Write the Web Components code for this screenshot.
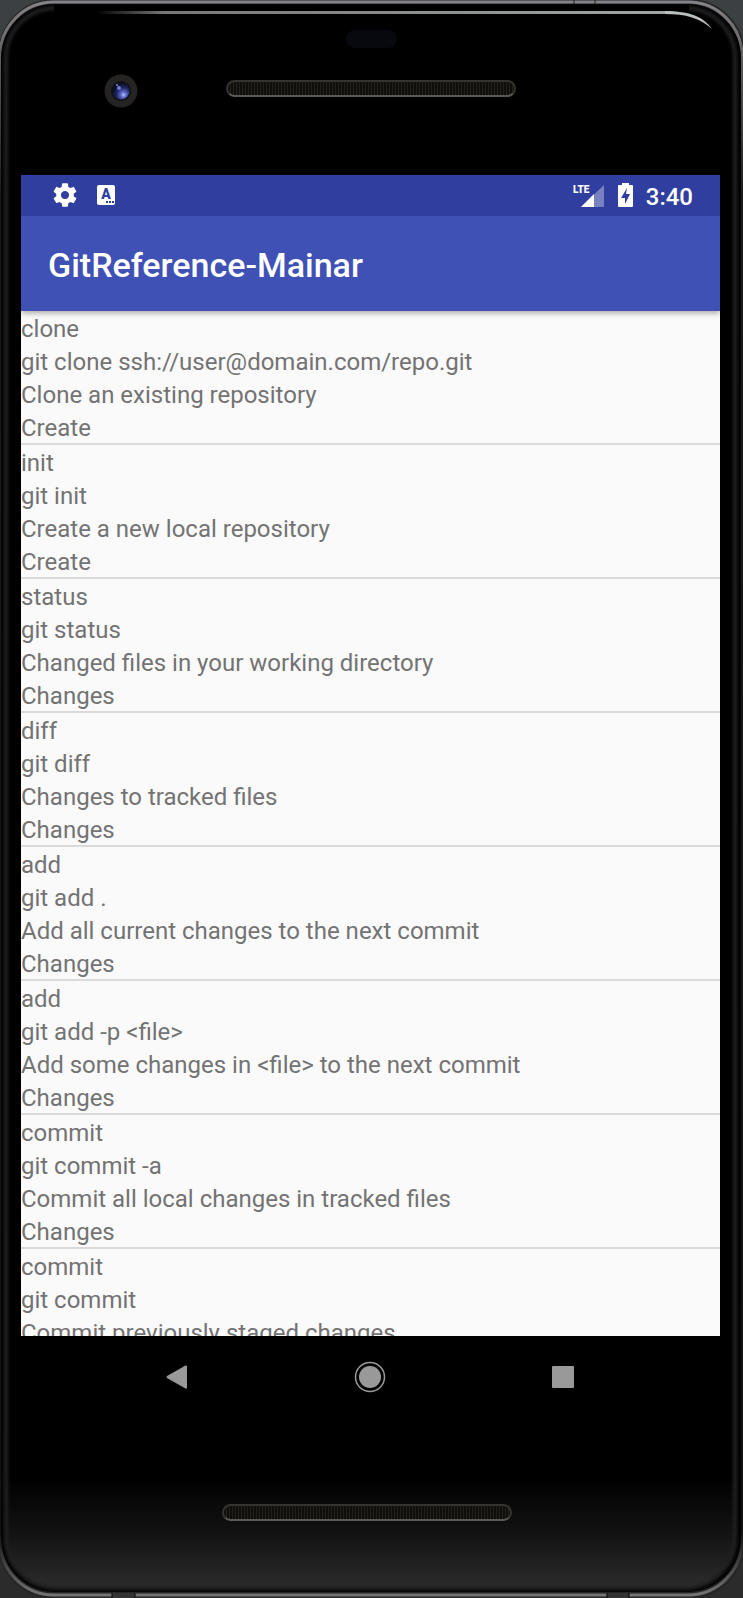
<!DOCTYPE html>
<html lang="en">
<head>
<meta charset="utf-8">
<meta name="viewport" content="width=device-width, initial-scale=1">
<title>GitReference-Mainar</title>
<style>
  html, body { margin: 0; height: 100%; }
  body { font-family: Roboto, "Liberation Sans", sans-serif; background: linear-gradient(#3c4043, #2b2b2b); }
</style>
</head>
<body>
<phone-device>
  <top-bezel slot="top"></top-bezel>
  <status-bar time="3:40"></status-bar>
  <app-bar>GitReference-Mainar</app-bar>
  <command-list></command-list>
  <nav-bar slot="nav"></nav-bar>
  <bottom-bezel slot="bottom"></bottom-bezel>
</phone-device>

<script>
const define = (name, html, setup) => {
  const template = document.createElement('template');
  template.innerHTML = html;
  customElements.define(name, class extends HTMLElement {
    constructor() {
      super();
      this.attachShadow({ mode: 'open' }).append(template.content.cloneNode(true));
    }
    connectedCallback() { if (setup) setup(this, this.shadowRoot); }
  });
};

/* Case outline, rim and glass reflections */
define('phone-shell', `
<style>
  :host { display: block; position: absolute; inset: 0; z-index: -1; overflow: hidden; }
  svg { display: block; width: 100%; height: 100%; }
  .rim { x: -2px; y: -1px; width: calc(100% + 4px); height: calc(100% + 2px); rx: 56px; }
  .band { x: 0px; y: 2px; width: calc(100% - 1px); height: calc(100% - 5px); rx: 54px; }
  .seam { x: 1px; y: 4px; width: calc(100% - 3px); height: calc(100% - 10px); rx: 54px; }
  .glass { x: 6px; y: 8px; width: calc(100% - 14px); height: calc(100% - 18px); rx: 50px; }
  .shine { x: 96px; y: 11px; width: calc(100% - 174px); height: 3px; }
</style>
<svg aria-hidden="true">
  <defs>
    <linearGradient id="edge" x2="0" y2="1">
      <stop offset="0" stop-color="#858387"/><stop offset=".04" stop-color="#5a595b"/>
      <stop offset=".12" stop-color="#1c1c1c"/><stop offset=".96" stop-color="#111"/><stop offset="1" stop-color="#747274"/>
    </linearGradient>
    <linearGradient id="shine"><stop offset="0" stop-color="#000"/><stop offset=".12" stop-color="#777"/><stop offset="1" stop-color="#a0a5a5"/></linearGradient>
    <linearGradient id="glass" x2="0" y2="1">
      <stop offset="0" stop-color="#000"/><stop offset=".93" stop-color="#000"/><stop offset=".965" stop-color="#121212"/><stop offset="1" stop-color="#2c2c2c"/>
    </linearGradient>
    <filter id="soft" x="-5%" y="-5%" width="110%" height="110%" color-interpolation-filters="sRGB"><feGaussianBlur stdDeviation="1.500"/></filter>
  </defs>
  <rect class="rim" fill="#262626"/>
  <rect class="band" fill="none" stroke="url(#edge)" stroke-width="3"/>
  <rect class="seam" fill="#030303"/>
  <rect class="glass" fill="url(#glass)" stroke="#202020" stroke-width="4" filter="url(#soft)"/>
  <rect x="54" y="5" style="width:calc(100% - 108px)" height="20" fill="#000"/>
  <rect class="shine" fill="url(#shine)"/>
  <svg x="100%" overflow="visible"><path d="M-78 11C-53 11-39 17-31 29C-43 18-57 14-78 14Z" fill="#b9bfbf"/></svg>
  <svg y="100%" overflow="visible">
    <rect x="112" y="-5" width="23" height="5" fill="#333"/><path d="M112-5v5M135-5v5" stroke="#090909"/>
  </svg>
  <svg x="100%" y="100%" overflow="visible">
    <rect x="-136" y="-5" width="22" height="5" fill="#333"/><path d="M-136-5v5M-114-5v5" stroke="#090909"/>
  </svg>
  <svg x="100%" overflow="visible"><path d="M-169 0v4M-148 0v4" stroke="#222"/></svg>
</svg>`);

define('phone-device', `
<style>
  :host { display: grid; grid-template-rows: 175px minmax(0, 1fr) 82px 180px; height: 100vh; position: relative; isolation: isolate; overflow: hidden; }
  main { display: flex; flex-direction: column; min-height: 0; margin: 0 23px 0 21px; background: #fafafa; }
</style>
<phone-shell></phone-shell>
<slot name="top"></slot>
<main><slot></slot></main>
<slot name="nav"></slot>
<slot name="bottom"></slot>`);

define('speaker-grille', `
<style>
  :host { display: block; box-sizing: border-box; width: 290px; height: 17px; border: 2px solid #35332f; border-bottom-color: #5b5855; border-radius: 9px;
    background: repeating-linear-gradient(90deg, #0f0e0b 0 2px, #24221c 2px 3px); }
</style>`);

define('top-bezel', `
<style>
  :host { display: grid; grid-template-columns: 1fr auto 1fr; grid-template-rows: 18px 34px; row-gap: 26px; padding: 30px 1px 0 0; align-content: start; }
  .sensor { grid-column: 2; justify-self: center; width: 51px; height: 18px; border-radius: 9px; background: #08090e; }
  .camera { grid-row: 2; margin-left: 104px; width: 34px; height: 34px; }
  speaker-grille { grid-row: 2; grid-column: 2; margin-top: 6px; }
</style>
<div class="sensor"></div>
<svg class="camera" viewBox="0 0 34 34" aria-hidden="true">
  <defs><radialGradient id="lens" cx=".65" cy=".72" r=".7"><stop offset="0" stop-color="#b4bcff"/><stop offset=".25" stop-color="#5a67c4"/><stop offset=".6" stop-color="#1d2560"/><stop offset="1" stop-color="#0b0d22"/></radialGradient></defs>
  <circle cx="17" cy="17" r="16.5" fill="#252423"/><circle cx="17" cy="17" r="10" fill="#111116"/>
  <circle cx="17" cy="17" r="8.5" fill="url(#lens)"/><circle cx="15" cy="14" r="2" fill="#6f7fd8"/><circle cx="13" cy="11" r="1" fill="#8791c0"/>
</svg>
<speaker-grille></speaker-grille>`);

define('bottom-bezel', `
<style>:host { display: flex; justify-content: center; align-items: flex-start; padding: 86px 10px 0 0; }</style>
<speaker-grille></speaker-grille>`);

define('status-bar', `
<style>
  :host { display: flex; align-items: center; justify-content: space-between; flex: none; box-sizing: border-box; height: 41px; padding: 0 27px 2px 30px; background: #303f9f; color: #fff; }
  div { display: flex; align-items: center; gap: 13px; }
  svg { display: block; }
  svg text { font-family: Roboto, sans-serif; font-weight: 900; }
  time { font-size: 24px; line-height: 28px; font-weight: 500; padding-top: 4px; }
</style>
<div>
  <svg width="28" height="28" viewBox="0 0 24 24" fill="#fff" role="img" aria-label="Settings"><path d="M19.43 12.98c.04-.32.07-.64.07-.98s-.03-.66-.07-.98l2.11-1.65c.19-.15.24-.42.12-.64l-2-3.46c-.12-.22-.39-.3-.61-.22l-2.49 1c-.52-.4-1.08-.73-1.69-.98l-.38-2.65C14.46 2.18 14.25 2 14 2h-4c-.25 0-.46.18-.49.42l-.38 2.65c-.61.25-1.17.59-1.69.98l-2.49-1c-.23-.09-.49 0-.61.22l-2 3.46c-.13.22-.07.49.12.64l2.11 1.65c-.04.32-.07.65-.07.98s.03.66.07.98l-2.11 1.65c-.19.15-.24.42-.12.64l2 3.46c.12.22.39.3.61.22l2.49-1c.52.4 1.08.73 1.69.98l.38 2.65c.03.24.24.42.49.42h4c.25 0 .46-.18.49-.42l.38-2.65c.61-.25 1.17-.59 1.69-.98l2.49 1c.23.09.49 0 .61-.22l2-3.46c.12-.22.07-.49-.12-.64l-2.11-1.65zM12 15.5c-1.93 0-3.5-1.57-3.5-3.5s1.57-3.5 3.5-3.5 3.5 1.57 3.5 3.5-1.57 3.5-3.5 3.5z"/></svg>
  <svg width="28" height="28" viewBox="0 0 28 28" role="img" aria-label="Keyboard"><rect x="5" y="4" width="18" height="20" rx="2" fill="#fff"/><text x="14" y="18" font-size="14" text-anchor="middle" fill="#303f9f">A</text><path d="M14 20h2v2h-2zM17 20h2v2h-2zM20 20h2v2h-2z" fill="#303f9f"/></svg>
</div>
<div>
  <svg width="32" height="28" viewBox="0 0 32 28" role="img" aria-label="LTE signal"><path d="M31 4v22H8z" fill="#fff" opacity=".35"/><path d="M21 13v13H8z" fill="#fff"/><text x="0" y="12" font-size="10" fill="#fff">LTE</text></svg>
  <svg width="15" height="28" viewBox="0 0 15 28" role="img" aria-label="Battery charging"><path d="M4 2h7v2h3q1 0 1 1v20q0 1-1 1H1q-1 0-1-1V5q0-1 1-1h3z" fill="#fff"/><path d="M9 7L3 17h4v6l5-10H8z" fill="#303f9f"/></svg>
  <time></time>
</div>`, (el, root) => { root.querySelector('time').textContent = el.getAttribute('time'); });

define('app-bar', `
<style>
  :host { display: flex; align-items: center; flex: none; box-sizing: border-box; height: 95px; padding: 2px 27px 0; background: #3f51b5; color: #fff; position: relative; box-shadow: 0 2px 6px rgba(0,0,0,.35); clip-path: inset(0 0 -10px 0); }
  h1 { margin: 0; font-size: 34px; line-height: 40px; font-weight: 500; }
</style>
<h1><slot></slot></h1>`);

define('command-item', `
<style>
  :host { display: block; font-size: 24px; line-height: 29px; color: #737373; border-bottom: 2px solid #dadada; }
  p { margin: 0; padding-top: 4px; white-space: nowrap; }
</style>`, (el, root) => {
  for (const key of ['name', 'usage', 'about', 'group']) {
    if (!el.hasAttribute(key)) continue;
    const line = document.createElement('p');
    line.textContent = el.getAttribute(key);
    root.append(line);
  }
});

const commands = [
  { name: 'clone', usage: 'git clone ssh://user@domain.com/repo.git', about: 'Clone an existing repository', group: 'Create' },
  { name: 'init', usage: 'git init', about: 'Create a new local repository', group: 'Create' },
  { name: 'status', usage: 'git status', about: 'Changed files in your working directory', group: 'Changes' },
  { name: 'diff', usage: 'git diff', about: 'Changes to tracked files', group: 'Changes' },
  { name: 'add', usage: 'git add .', about: 'Add all current changes to the next commit', group: 'Changes' },
  { name: 'add', usage: 'git add -p <file>', about: 'Add some changes in <file> to the next commit', group: 'Changes' },
  { name: 'commit', usage: 'git commit -a', about: 'Commit all local changes in tracked files', group: 'Changes' },
  { name: 'commit', usage: 'git commit', about: 'Commit previously staged changes' },
];

define('command-list', `
<style>
  :host { display: block; flex: 1; min-height: 0; overflow: auto; scrollbar-width: none; }
  ul { list-style: none; margin: 0; padding: 0; }
</style>
<ul></ul>`, (el, root) => {
  root.querySelector('ul').replaceChildren(...commands.map(command => {
    const li = document.createElement('li');
    const item = document.createElement('command-item');
    for (const [key, value] of Object.entries(command)) item.setAttribute(key, value);
    li.append(item);
    return li;
  }));
});

define('nav-bar', `
<style>
  :host { display: flex; justify-content: center; align-items: center; gap: 145px; padding-right: 4px; }
  button { all: unset; width: 48px; height: 48px; display: grid; place-items: center; cursor: pointer; }
  svg { display: block; fill: #999; }
</style>
<button aria-label="Back"><svg width="32" height="32" viewBox="0 0 32 32"><path d="M6 15L24.500 4.500Q26 4 26 5.500V26.500Q26 28 24.500 27.500L6 17Q5 16 6 15Z"/></svg></button>
<button aria-label="Home"><svg width="32" height="32" viewBox="0 0 32 32"><circle cx="16" cy="16" r="14.500" fill="none" stroke="#999" stroke-width="1.500"/><circle cx="16" cy="16" r="11"/></svg></button>
<button aria-label="Recent apps"><svg width="32" height="32" viewBox="0 0 32 32"><rect x="5" y="5" width="22" height="22" rx="1"/></svg></button>`);
</script>
</body>
</html>
